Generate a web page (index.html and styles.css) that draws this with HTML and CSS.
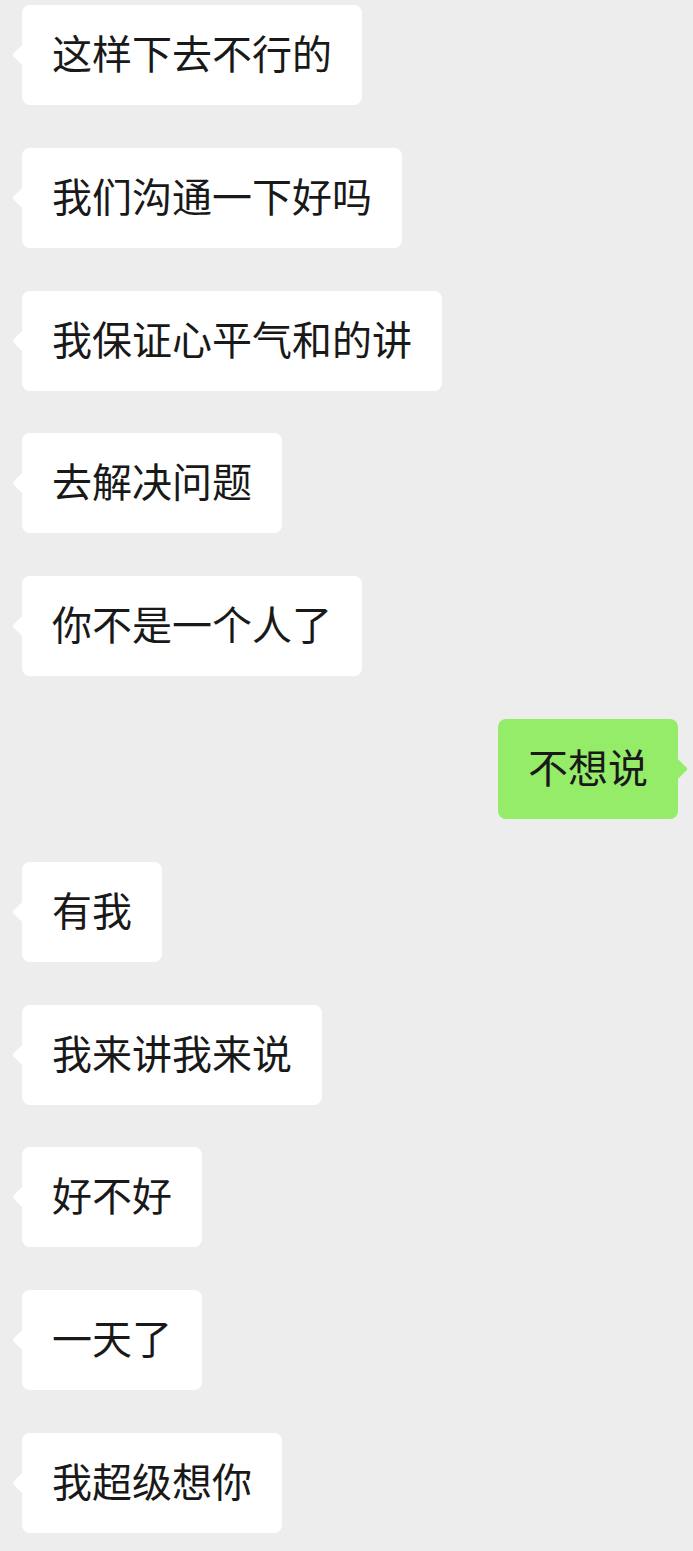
FILE: index.html
```html
<!DOCTYPE html>
<html lang="zh-CN">
<head>
    <meta charset="UTF-8">
    <meta name="viewport" content="width=device-width, initial-scale=1.0">
    <title>聊天</title>
    <link rel="stylesheet" href="styles.css">
</head>
<body>
    <div class="chat">
        <div class="msg left"><div class="bubble">这样下去不行的</div></div>
        <div class="msg left"><div class="bubble">我们沟通一下好吗</div></div>
        <div class="msg left"><div class="bubble">我保证心平气和的讲</div></div>
        <div class="msg left"><div class="bubble">去解决问题</div></div>
        <div class="msg left"><div class="bubble">你不是一个人了</div></div>
        <div class="msg right"><div class="bubble">不想说</div></div>
        <div class="msg left"><div class="bubble">有我</div></div>
        <div class="msg left"><div class="bubble">我来讲我来说</div></div>
        <div class="msg left"><div class="bubble">好不好</div></div>
        <div class="msg left"><div class="bubble">一天了</div></div>
        <div class="msg left"><div class="bubble">我超级想你</div></div>
    </div>
</body>
</html>
```
FILE: styles.css
```css
body {
    margin: 0;
    padding: 0;
    background-color: #ededed;
    font-family: "Noto Sans CJK SC", "Noto Sans", sans-serif;
    color: #191919;
}
.chat {
    display: flex;
    flex-direction: column;
    gap: 42.8px;
    padding: 5px 15px 19px 22px;
}
.msg {
    display: flex;
}
.msg.right {
    justify-content: flex-end;
}
.bubble {
    position: relative;
    height: 94px;
    line-height: 94px;
    padding: 0 30px 6px;
    font-size: 40px;
    background: #ffffff;
    border-radius: 8px;
    white-space: nowrap;
}
.bubble::before {
    content: "";
    position: absolute;
    top: 43px;
    width: 14px;
    height: 14px;
    background: inherit;
    border-radius: 2px;
    transform: rotate(45deg);
}
.left .bubble::before {
    left: -7px;
}
.right .bubble {
    background: #95ec69;
}
.right .bubble::before {
    right: -7px;
}
```
